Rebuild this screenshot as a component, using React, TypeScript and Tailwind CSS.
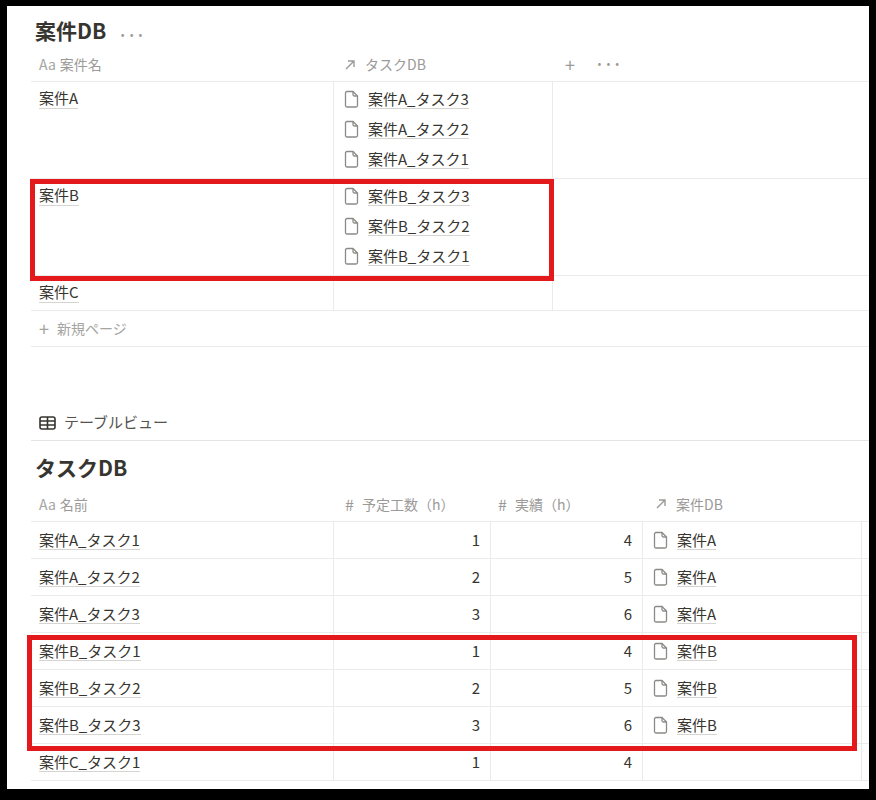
import React from "react";

const font = { fontFamily: '"Noto Sans CJK JP", "Noto Sans", sans-serif' };

const PageIcon = () => (
  <svg width="16" height="18" viewBox="0 0 16 18" fill="none" className="shrink-0">
    <path d="M3 1.5h6l4.5 4.5v9.5a1.5 1.5 0 0 1-1.5 1.5H3a1.5 1.5 0 0 1-1.5-1.5v-12.5A1.5 1.5 0 0 1 3 1.5z" stroke="#8a8a87" strokeWidth="1.3" />
    <path d="M9 1.5v3a1.5 1.5 0 0 0 1.5 1.5h3" stroke="#8a8a87" strokeWidth="1.3" />
  </svg>
);

const Arrow = () => (
  <svg width="14" height="14" viewBox="0 0 14 14" className="shrink-0">
    <path d="M3 11L11 3M5 3h6v6" stroke="#9b9a97" strokeWidth="1.4" fill="none" />
  </svg>
);

const Link = ({ children }: { children: React.ReactNode }) => (
  <span className="border-b border-[#d5d4d1] leading-[18px] text-[#37352f]">{children}</span>
);

const Rel = ({ label }: { label: string }) => (
  <div className="flex h-[30px] items-center gap-2">
    <PageIcon />
    <Link>{label}</Link>
  </div>
);

const Dots = () => <span className="text-[#9b9a97] text-[15px] font-bold">···</span>;

const Aa = () => <span className="text-[#a5a4a1] text-[14px] mr-1">Aa</span>;

export default function App() {
  const projects = [
    { name: "案件A", tasks: ["案件A_タスク3", "案件A_タスク2", "案件A_タスク1"] },
    { name: "案件B", tasks: ["案件B_タスク3", "案件B_タスク2", "案件B_タスク1"] },
    { name: "案件C", tasks: [] },
  ];
  const tasks = [
    ["案件A_タスク1", 1, 4, "案件A"],
    ["案件A_タスク2", 2, 5, "案件A"],
    ["案件A_タスク3", 3, 6, "案件A"],
    ["案件B_タスク1", 1, 4, "案件B"],
    ["案件B_タスク2", 2, 5, "案件B"],
    ["案件B_タスク3", 3, 6, "案件B"],
    ["案件C_タスク1", 1, 4, ""],
  ] as const;

  return (
    <div className="h-[800px] w-[876px] bg-black pt-[6px] pl-[7px] pr-[7px] pb-[11px]" style={font}>
      <div className="relative h-full w-full overflow-hidden bg-white pl-[24px] text-[15px] text-[#37352f]">
        {/* 案件DB */}
        <div className="flex h-[42px] items-end gap-3 pl-[4px] pb-[2px]">
          <span className="text-[21px] font-bold">案件DB</span>
          <Dots />
        </div>
        <div className="flex h-[34px] border-b border-[#ebebea] text-[#9b9a97] text-[14px]">
          <div className="flex w-[302px] items-center pl-[8px]"><Aa />案件名</div>
          <div className="flex w-[220px] items-center gap-2 pl-[10px]"><Arrow />タスクDB</div>
          <div className="flex items-center gap-5 pl-[12px] text-[18px]"><span>+</span><Dots /></div>
        </div>
        {projects.map((p) => (
          <div key={p.name} className="flex border-b border-[#ebebea]">
            <div className="w-[302px] pl-[8px] pt-[5px]"><Link>{p.name}</Link></div>
            <div className={`w-[220px] border-x border-[#ebebea] pl-[10px] pt-[2px] ${p.tasks.length ? "pb-[4px]" : "h-[34px]"}`}>
              {p.tasks.map((t) => <Rel key={t} label={t} />)}
            </div>
          </div>
        ))}
        <div className="flex h-[36px] items-center gap-2 border-b border-[#ebebea] pl-[8px] text-[#a5a4a1] text-[14px]">
          <span className="text-[18px]">+</span>新規ページ
        </div>

        {/* テーブルビュー */}
        <div className="mt-[58px] flex h-[36px] items-center gap-2 border-b border-[#e5e5e3] pl-[8px] text-[#37352f]">
          <svg width="17" height="14" viewBox="0 0 17 14">
            <rect x="1" y="1" width="15" height="12" rx="2" stroke="#37352f" strokeWidth="1.6" fill="none" />
            <path d="M1 5h15M1 9h15M8.5 1v12" stroke="#37352f" strokeWidth="1.6" />
          </svg>
          <span className="text-[#55534e]">テーブルビュー</span>
        </div>
        <div className="flex h-[46px] items-end pl-[4px] pb-[4px]">
          <span className="text-[21px] font-bold">タスクDB</span>
        </div>
        <div className="flex h-[35px] border-b border-[#ebebea] text-[#9b9a97] text-[14px]">
          <div className="flex w-[302px] items-center pl-[8px]"><Aa />名前</div>
          <div className="flex w-[157px] items-center gap-2 pl-[12px]"><span className="text-[16px]">#</span>予定工数（h）</div>
          <div className="flex w-[152px] items-center gap-2 pl-[8px]"><span className="text-[16px]">#</span>実績（h）</div>
          <div className="flex w-[220px] items-center gap-2 pl-[12px]"><Arrow />案件DB</div>
        </div>
        {tasks.map(([n, a, b, p]) => (
          <div key={n} className="flex h-[37px] border-b border-[#ebebea]">
            <div className="flex w-[302px] items-center pl-[8px]"><Link>{n}</Link></div>
            <div className="flex w-[157px] items-center justify-end border-l border-[#ebebea] pr-[10px]">{a}</div>
            <div className="flex w-[152px] items-center justify-end border-l border-[#ebebea] pr-[10px]">{b}</div>
            <div className="flex w-[220px] items-center gap-2 border-x border-[#ebebea] pl-[10px]">
              {p && (<><PageIcon /><Link>{p}</Link></>)}
            </div>
          </div>
        ))}

        {/* highlights */}
        <div className="absolute left-[23px] top-[173px] h-[102px] w-[524px] border-[5px] border-[#e3191c]" />
        <div className="absolute left-[20px] top-[629px] h-[116px] w-[830px] border-[5px] border-[#e3191c]" />
      </div>
    </div>
  );
}
